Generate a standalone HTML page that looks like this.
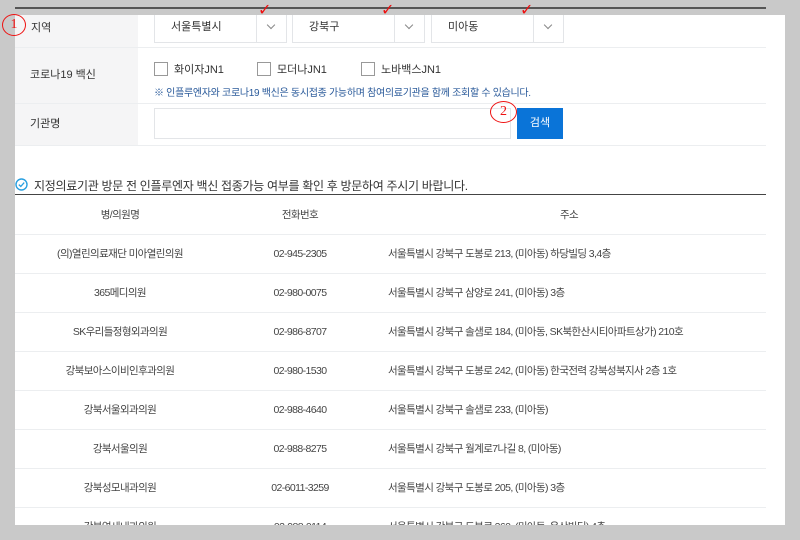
<!DOCTYPE html>
<html><head><meta charset="utf-8"><style>
*{margin:0;padding:0;box-sizing:border-box}
body{width:800px;height:540px;background:#c9c9c9;position:relative;overflow:hidden;font-family:"Liberation Sans","Noto Sans CJK KR",sans-serif;color:#333;font-size:11px}
.topline{position:absolute;left:15px;top:7px;width:751px;height:2px;background:#555}
.panel{position:absolute;left:15px;top:15px;width:770px;height:510px;background:#fff;overflow:hidden}
.lab{position:absolute;left:0;width:123px;background:#f5f5f6;font-size:11px;color:#333}
.hl{position:absolute;left:0;width:751px;height:1px;background:#eceef0}
.sel{position:absolute;top:-3px;height:31px;border:1px solid #e3e5e8;background:#fff;font-size:11px;padding-left:16px;line-height:29px}
.sel .ar{position:absolute;right:0;top:0;width:30px;height:29px;border-left:1px solid #e3e5e8}
.sel .ar:after{content:"";position:absolute;left:11px;top:9px;width:5px;height:5px;border-right:1px solid #888;border-bottom:1px solid #888;transform:rotate(45deg)}
.cb{position:absolute;top:46px;font-size:11px}
.cb i{display:inline-block;width:14px;height:14px;border:1px solid #999;vertical-align:-3px;margin-right:6px}
.row{position:absolute;left:0;width:751px;height:39px;border-bottom:1px solid #eceef0;font-size:10.5px;color:#444;letter-spacing:-0.6px}
.row span{position:absolute;top:0;line-height:39px}
.c1{left:0;width:210px;text-align:center}
.c2{left:200px;width:170px;text-align:center}
.c3{left:373px}
.red{position:absolute;color:#e11;font-family:"Liberation Serif",serif}
</style></head><body>
<div class="topline"></div>
<div class="panel">
 <div class="lab" style="top:0;height:32px;line-height:26px;padding-left:16px">지역</div>
 <div class="hl" style="top:32px"></div>
 <div class="lab" style="top:33px;height:55px;line-height:55px;padding-left:15px">코로나19 백신</div>
 <div class="hl" style="top:88px"></div>
 <div class="lab" style="top:89px;height:41px;line-height:41px;padding-left:15px">기관명</div>
 <div class="hl" style="top:130px"></div>
 <div class="sel" style="left:139px;width:133px">서울특별시<div class="ar"></div></div>
 <div class="sel" style="left:277px;width:133px">강북구<div class="ar"></div></div>
 <div class="sel" style="left:416px;width:133px">미아동<div class="ar"></div></div>
 <div class="cb" style="left:139px"><i></i>화이자JN1</div>
 <div class="cb" style="left:242px"><i></i>모더나JN1</div>
 <div class="cb" style="left:346px"><i></i>노바백스JN1</div>
 <div style="position:absolute;left:139px;top:69px;font-size:10px;color:#2a5a9a;letter-spacing:-0.3px">※ 인플루엔자와 코로나19 백신은 동시접종 가능하며 참여의료기관을 함께 조회할 수 있습니다.</div>
 <div style="position:absolute;left:139px;top:93px;width:357px;height:31px;border:1px solid #e3e5e8"></div>
 <div style="position:absolute;left:502px;top:93px;width:46px;height:31px;background:#0a74d8;color:#fff;text-align:center;line-height:31px;font-size:11px">검색</div>
 <svg style="position:absolute;left:0;top:163px" width="13" height="13" viewBox="0 0 13 13"><circle cx="6.5" cy="6.5" r="5.5" fill="none" stroke="#2aa0e0" stroke-width="1.4"/><path d="M3.8 6.6 L5.8 8.4 L9.2 4.6" fill="none" stroke="#2aa0e0" stroke-width="1.3"/></svg>
 <div style="position:absolute;left:19px;top:162px;font-size:12px;color:#333;letter-spacing:-0.3px">지정의료기관 방문 전 인플루엔자 백신 접종가능 여부를 확인 후 방문하여 주시기 바랍니다.</div>
 <div style="position:absolute;left:0;top:179px;width:751px;height:1px;background:#444"></div>
 <div class="row" style="top:180px;height:40px"><span class="c1" style="line-height:40px">병/의원명</span><span class="c2" style="line-height:40px">전화번호</span><span class="c3" style="left:545px;line-height:40px">주소</span></div>
 <div class="row" style="top:220px"><span class="c1">(의)열린의료재단 미아열린의원</span><span class="c2">02-945-2305</span><span class="c3">서울특별시 강북구 도봉로 213, (미아동) 하당빌딩 3,4층</span></div>
 <div class="row" style="top:259px"><span class="c1">365메디의원</span><span class="c2">02-980-0075</span><span class="c3">서울특별시 강북구 삼양로 241, (미아동) 3층</span></div>
 <div class="row" style="top:298px"><span class="c1">SK우리들정형외과의원</span><span class="c2">02-986-8707</span><span class="c3">서울특별시 강북구 솔샘로 184, (미아동, SK북한산시티아파트상가) 210호</span></div>
 <div class="row" style="top:337px"><span class="c1">강북보아스이비인후과의원</span><span class="c2">02-980-1530</span><span class="c3">서울특별시 강북구 도봉로 242, (미아동) 한국전력 강북성북지사 2층 1호</span></div>
 <div class="row" style="top:376px"><span class="c1">강북서울외과의원</span><span class="c2">02-988-4640</span><span class="c3">서울특별시 강북구 솔샘로 233, (미아동)</span></div>
 <div class="row" style="top:415px"><span class="c1">강북서울의원</span><span class="c2">02-988-8275</span><span class="c3">서울특별시 강북구 월계로7나길 8, (미아동)</span></div>
 <div class="row" style="top:454px"><span class="c1">강북성모내과의원</span><span class="c2">02-6011-3259</span><span class="c3">서울특별시 강북구 도봉로 205, (미아동) 3층</span></div>
 <div class="row" style="top:493px"><span class="c1">강북연세내과의원</span><span class="c2">02-988-0114</span><span class="c3">서울특별시 강북구 도봉로 260, (미아동, 운산빌딩) 4층</span></div>
</div>
<div class="red" style="left:2px;top:14px;width:24px;height:22px;border:1.5px solid #e11;border-radius:50%;font-size:14px;text-align:center;line-height:20px">1</div>
<div class="red" style="left:258px;top:0;font-size:16px">✓</div>
<div class="red" style="left:381px;top:0;font-size:16px">✓</div>
<div class="red" style="left:520px;top:0;font-size:16px">✓</div>
<div class="red" style="left:490px;top:101px;width:27px;height:22px;border:1.5px solid #e11;border-radius:50%;font-size:14px;text-align:center;line-height:20px">2</div>
</body></html>
